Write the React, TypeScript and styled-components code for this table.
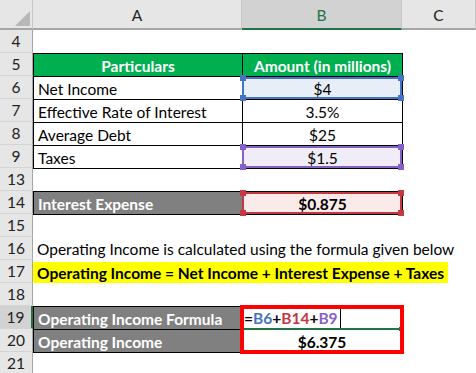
import styled, { createGlobalStyle, css } from "styled-components";

const GlobalStyle = createGlobalStyle`
  html, body {
    margin: 0;
    padding: 0;
    background: #fff;
  }
  body {
    font-family: Lato, "Liberation Sans", sans-serif;
    font-size: 15.5px;
    color: #000;
  }
`;

const Sheet = styled.div`
  display: grid;
  grid-template-columns: 33px 209px 160px 1fr;
  grid-template-rows: 30px;
  grid-auto-rows: 23px;
  width: 476px;
  height: 373px;
  overflow: hidden;
`;

const Corner = styled.div`
  position: relative;
  background: #e6e6e6;
  border-right: 1px solid #c6c6c6;
  border-bottom: 2px solid #a6a6a6;
  &::after {
    content: "";
    position: absolute;
    right: 2px;
    bottom: 2px;
    border-style: solid;
    border-width: 0 0 15px 15px;
    border-color: transparent transparent #b8b8b8 transparent;
  }
`;

const ColHeader = styled.div<{ $selected?: boolean }>`
  display: flex;
  align-items: center;
  justify-content: center;
  background: ${(p) => (p.$selected ? "#d2d2d2" : "#e6e6e6")};
  color: ${(p) => (p.$selected ? "#217346" : "#222")};
  border-right: 1px solid #c6c6c6;
  border-bottom: 2px solid ${(p) => (p.$selected ? "#217346" : "#a6a6a6")};
  padding-top: 2px;
`;

const RowHeader = styled.div<{ $active?: boolean }>`
  grid-column: 1;
  display: flex;
  align-items: center;
  justify-content: center;
  background: ${(p) => (p.$active ? "#d2d2d2" : "#e6e6e6")};
  color: #222;
  border-bottom: 1px solid #d4d4d4;
  border-right: ${(p) => (p.$active ? "2px solid #217346" : "1px solid #a6a6a6")};
`;

const Cell = styled.div<{
  $col: number;
  $fill?: string;
  $boxed?: boolean;
  $bold?: boolean;
  $center?: boolean;
  $ink?: string;
}>`
  grid-column: ${(p) => p.$col};
  position: relative;
  display: flex;
  align-items: center;
  justify-content: ${(p) => (p.$center ? "center" : "flex-start")};
  padding: 1px 4px 0;
  white-space: nowrap;
  background: ${(p) => p.$fill || "transparent"};
  color: ${(p) => p.$ink || "#000"};
  font-weight: ${(p) => (p.$bold ? 700 : 400)};
  ${(p) =>
    p.$boxed &&
    css`
      border: 1px solid #000;
      margin: 0 -1px -1px 0;
    `}
`;

const Spill = styled.div`
  grid-column: 2 / -1;
  display: flex;
  align-items: center;
  padding: 1px 4px 0;
  white-space: nowrap;
`;

const Highlight = styled.div`
  grid-column: 2 / -1;
  display: flex;
  align-items: stretch;
  padding: 2px 0 0;
`;

const Marker = styled.span`
  display: flex;
  align-items: center;
  background: #ffff00;
  font-weight: 700;
  padding: 0 4px;
  white-space: nowrap;
`;

const Selection = styled.div<{ $tone: string }>`
  position: absolute;
  top: 0;
  left: -1px;
  right: 0;
  bottom: 0;
  border: 2px solid ${(p) => p.$tone};
  z-index: 2;
  pointer-events: none;
`;

const Handle = styled.span<{ $tone: string; $x: "left" | "right"; $y: "top" | "bottom" }>`
  position: absolute;
  width: 6px;
  height: 6px;
  background: ${(p) => p.$tone};
  ${(p) => p.$x}: -4px;
  ${(p) => p.$y}: -4px;
`;

const FormulaBox = styled.div`
  grid-column: 3;
  grid-row: span 2;
  position: relative;
  display: flex;
  flex-direction: column;
`;

const FormulaLine = styled.div`
  position: relative;
  height: 24px;
  display: flex;
  align-items: stretch;
  padding-left: 2px;
  border-bottom: 2px solid #217346;
  margin-right: 3px;
  box-sizing: border-box;
  &::after {
    content: "";
    position: absolute;
    right: -4px;
    bottom: -3px;
    width: 4px;
    height: 4px;
    background: #217346;
  }
`;

const FormulaText = styled.span`
  display: flex;
  align-items: center;
  padding-top: 1px;
  font-weight: 700;
`;

const Ref = styled.span<{ $tone: string }>`
  color: ${(p) => p.$tone};
`;

const Caret = styled.span`
  width: 1px;
  background: #000;
  margin: 2px 0 0 2px;
`;

const Result = styled.div`
  flex: 1;
  display: flex;
  align-items: center;
  justify-content: center;
  font-weight: 700;
  padding-top: 1px;
`;

const Frame = styled.div`
  position: absolute;
  top: -1px;
  left: -2px;
  right: -2px;
  bottom: -2px;
  border: 4px solid #ff0000;
  z-index: 3;
  pointer-events: none;
`;

const GREEN = "#00b050";
const GREY = "#808080";
const BLUE = "#4472c4";
const RED = "#c4383f";
const PURPLE = "#8561c5";

function Picked({ tone }: { tone: string }) {
  return (
    <Selection $tone={tone}>
      <Handle $tone={tone} $x="left" $y="top" />
      <Handle $tone={tone} $x="right" $y="top" />
      <Handle $tone={tone} $x="left" $y="bottom" />
      <Handle $tone={tone} $x="right" $y="bottom" />
    </Selection>
  );
}

export default function App() {
  return (
    <>
      <GlobalStyle />
      <Sheet>
        <Corner />
        <ColHeader>A</ColHeader>
        <ColHeader $selected>B</ColHeader>
        <ColHeader>C</ColHeader>

        <RowHeader>4</RowHeader>

        <RowHeader>5</RowHeader>
        <Cell $col={2} $boxed $fill={GREEN} $ink="#fff" $bold $center>Particulars</Cell>
        <Cell $col={3} $boxed $fill={GREEN} $ink="#fff" $bold $center>Amount (in millions)</Cell>

        <RowHeader>6</RowHeader>
        <Cell $col={2} $boxed>Net Income</Cell>
        <Cell $col={3} $boxed $center $fill="#e8eef8">
          $4
          <Picked tone={BLUE} />
        </Cell>

        <RowHeader>7</RowHeader>
        <Cell $col={2} $boxed>Effective Rate of Interest</Cell>
        <Cell $col={3} $boxed $center>3.5%</Cell>

        <RowHeader>8</RowHeader>
        <Cell $col={2} $boxed>Average Debt</Cell>
        <Cell $col={3} $boxed $center>$25</Cell>

        <RowHeader>9</RowHeader>
        <Cell $col={2} $boxed>Taxes</Cell>
        <Cell $col={3} $boxed $center $fill="#f0ecf8">
          $1.5
          <Picked tone={PURPLE} />
        </Cell>

        <RowHeader>13</RowHeader>

        <RowHeader>14</RowHeader>
        <Cell $col={2} $boxed $fill={GREY} $ink="#fff" $bold>Interest Expense</Cell>
        <Cell $col={3} $boxed $center $bold $fill="#fbeaea">
          $0.875
          <Picked tone={RED} />
        </Cell>

        <RowHeader>15</RowHeader>

        <RowHeader>16</RowHeader>
        <Spill>Operating Income is calculated using the formula given below</Spill>

        <RowHeader>17</RowHeader>
        <Highlight>
          <Marker>Operating Income = Net Income + Interest Expense + Taxes</Marker>
        </Highlight>

        <RowHeader>18</RowHeader>

        <RowHeader $active>19</RowHeader>
        <Cell $col={2} $boxed $fill={GREY} $ink="#fff" $bold>Operating Income Formula</Cell>
        <FormulaBox>
          <FormulaLine>
            <FormulaText>
              =<Ref $tone={BLUE}>B6</Ref>+<Ref $tone={RED}>B14</Ref>+<Ref $tone={PURPLE}>B9</Ref>
            </FormulaText>
            <Caret />
          </FormulaLine>
          <Result>$6.375</Result>
          <Frame />
        </FormulaBox>

        <RowHeader>20</RowHeader>
        <Cell $col={2} $boxed $fill={GREY} $ink="#fff" $bold>Operating Income</Cell>

        <RowHeader>21</RowHeader>
      </Sheet>
    </>
  );
}
